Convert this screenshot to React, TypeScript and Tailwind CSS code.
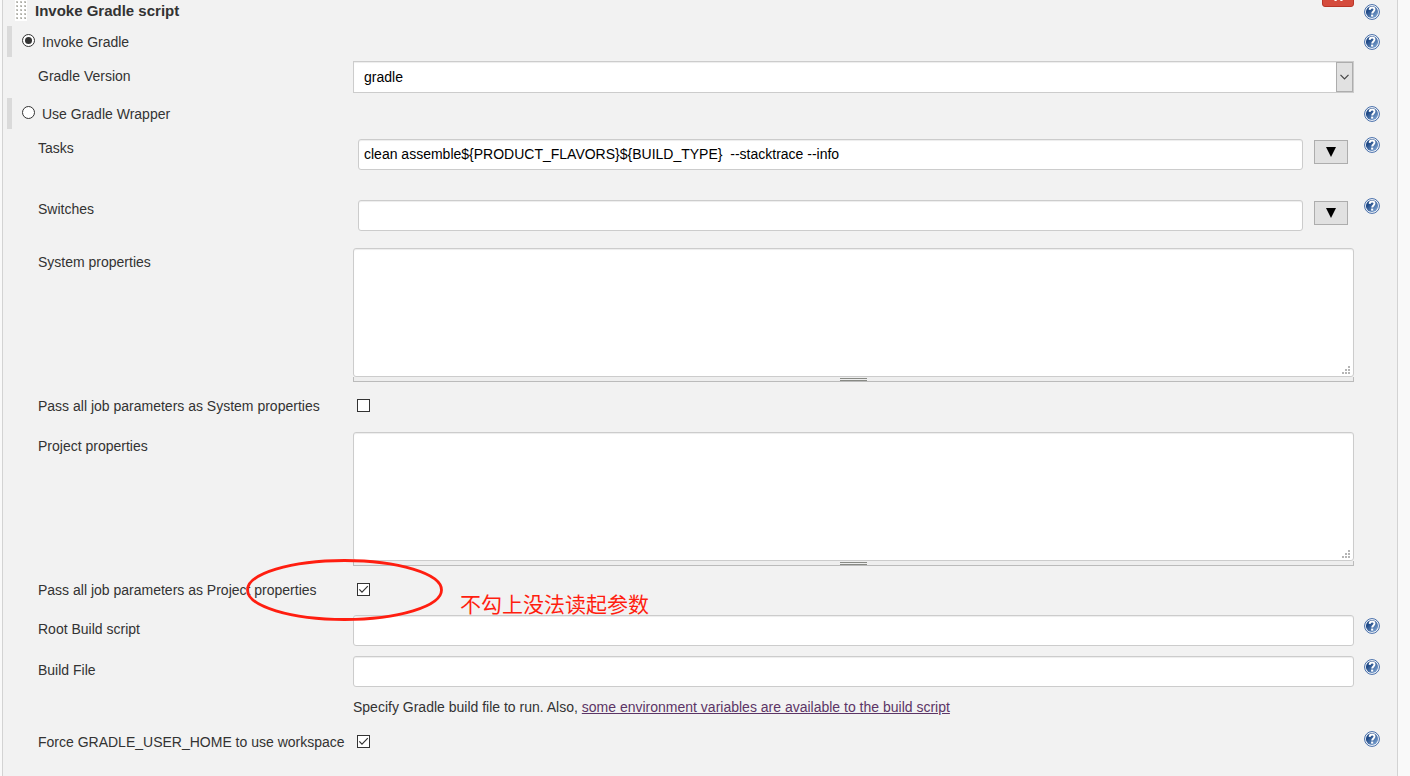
import type { ReactNode } from "react";

function HelpIcon({ topic }: { topic: string }) {
  return (
    <a href="#help" aria-label={`Help for feature: ${topic}`} className="block size-4">
      <svg viewBox="0 0 16 16" className="block size-4">
        <defs>
          <linearGradient id="help-fill" x1="0" y1="0" x2="1" y2="1">
            <stop offset="0.3" stopColor="#204a87" />
            <stop offset="1" stopColor="#8fb4e0" />
          </linearGradient>
        </defs>
        <circle cx="8" cy="8" r="7.4" fill="#fff" stroke="#3f68a6" strokeWidth="1" />
        <circle cx="8" cy="8" r="6.1" fill="url(#help-fill)" />
        <path
          d="M5.6 5.9C5.7 4.2 6.7 3.5 8.1 3.5s2.4.8 2.4 2.1c0 1.9-2.3 1.9-2.3 4"
          fill="none"
          stroke="#fff"
          strokeWidth="1.9"
        />
        <rect x="7.1" y="10.6" width="2.1" height="2" fill="#fff" />
      </svg>
    </a>
  );
}

function Check({ id, checked }: { id: string; checked?: boolean }) {
  return (
    <span className="relative ml-1 mt-3 block size-[13px]">
      <input
        id={id}
        type="checkbox"
        defaultChecked={checked}
        className="peer block size-[13px] appearance-none border border-[#333] bg-white"
      />
      <svg
        viewBox="0 0 13 13"
        className="pointer-events-none absolute inset-0 hidden size-[13px] peer-checked:block"
      >
        <path d="M2.3 6.3 5 9.2 10.8 3.2" fill="none" stroke="#333" strokeWidth="1.2" />
      </svg>
    </span>
  );
}

type RowProps = {
  label: string;
  id: string;
  height: string;
  help?: boolean;
  children: ReactNode;
};

function Row({ label, id, height, help, children }: RowProps) {
  return (
    <div className={`flex items-start pl-[35px] pr-[17px] ${height}`}>
      <label htmlFor={id} className="w-[315px] shrink-0 pt-[9px]">
        {label}
      </label>
      <div className="min-w-0 flex-1">{children}</div>
      <div className="ml-[10px] w-4 shrink-0 pt-2">{help && <HelpIcon topic={label} />}</div>
    </div>
  );
}

function RadioRow({ label, checked }: { label: string; checked?: boolean }) {
  return (
    <div className="flex h-[31px] items-center pl-1 pr-[17px]">
      <span className="w-[5px] self-stretch bg-[#dadada]" />
      <label className="ml-[10px] flex flex-1 items-center gap-[7px]">
        <span className="relative -mt-[3px] block size-[13px]">
          <input
            type="radio"
            name="use-wrapper"
            defaultChecked={checked}
            className="peer block size-[13px] appearance-none rounded-full border border-[#333] bg-white"
          />
          <span className="pointer-events-none absolute inset-[3px] hidden rounded-full bg-[#333] peer-checked:block" />
        </span>
        {label}
      </label>
      <HelpIcon topic={label} />
    </div>
  );
}

const field =
  "block w-full border border-[#ccc] bg-white text-black shadow-[inset_0_1px_1px_rgba(0,0,0,0.075)] outline-none";

function ExpandableInput({ id, value }: { id: string; value?: string }) {
  return (
    <div className="flex items-start pl-[5px] pr-[6px] pt-[10px]">
      <input id={id} defaultValue={value} className={`${field} h-[31px] flex-1 rounded-[3px] px-[5px] pb-[2px]`} />
      <button
        type="button"
        aria-label="Expand field"
        className="ml-[11px] mt-px flex h-6 w-[34px] shrink-0 items-center justify-center border border-[#adadad] bg-[#e1e1e1]"
      >
        <svg viewBox="0 0 10 10" className="size-[10px]">
          <path d="M0 0H10L5 10Z" fill="#000" />
        </svg>
      </button>
    </div>
  );
}

function PropertiesArea({ id }: { id: string }) {
  return (
    <div className="pt-[5px]">
      <div className="relative">
        <textarea id={id} className={`${field} h-[129px] resize-none rounded-[3px] p-[5px]`} />
        <svg viewBox="0 0 8 8" className="pointer-events-none absolute bottom-[3px] right-1 size-2" fill="#b5b5b5">
          <path d="M6 0h2v2H6zM3 3h2v2H3zM6 3h2v2H6zM0 6h2v2H0zM3 6h2v2H3zM6 6h2v2H6z" />
        </svg>
      </div>
      <div className="flex h-[5px] justify-center border border-t-0 border-[#bbb] bg-[#eee]">
        <span className="mt-px h-[3px] w-[27px] border-y border-[#888a85]" />
      </div>
    </div>
  );
}

function TextField({ id }: { id: string }) {
  return (
    <div className="pt-[5px]">
      <input id={id} className={`${field} h-[31px] rounded-[3px] px-[5px]`} />
    </div>
  );
}

export default function App() {
  return (
    <main className="flex min-h-screen bg-[#f9f9f9] pl-[2px] pr-3 font-['Liberation_Sans',Arial,sans-serif] text-[14px] leading-5 text-[#333]">
      <form className="min-w-0 flex-1 border-x border-[#d3d3d3] bg-[#f2f2f2]">
        <header className="flex h-[26px] items-start overflow-hidden pl-3 pr-[17px]">
          <svg className="h-[21px] w-3">
            <defs>
              <pattern id="grip" width="4" height="4" patternUnits="userSpaceOnUse">
                <rect width="4" height="4" fill="#fff" />
                <rect x="1" y="1" width="2" height="2" fill="#c6c6c0" />
                <rect x="2" y="2" width="1" height="1" fill="#a8a8a2" />
              </pattern>
            </defs>
            <rect width="12" height="21" fill="url(#grip)" />
          </svg>
          <h2 className="ml-2 flex-1 pt-px text-[15px] font-bold">Invoke Gradle script</h2>
          <button
            type="button"
            aria-label="Delete"
            className="-mt-4 flex h-[23px] w-8 items-end justify-center rounded-[3px] border border-[#b93527] bg-[#d54c3d] pb-[5px]"
          >
            <svg viewBox="0 0 9 10" className="h-[10px] w-[9px]">
              <path d="M1 0 8 10M8 0 1 10" stroke="#fff" strokeWidth="2.2" />
            </svg>
          </button>
          <span className="ml-[10px] pt-1">
            <HelpIcon topic="Invoke Gradle script" />
          </span>
        </header>

        <RadioRow label="Invoke Gradle" checked />
        <Row label="Gradle Version" id="version" height="h-[41px]">
          <div className="relative pt-1">
            <select id="version" className={`${field} h-8 appearance-none px-[10px]`}>
              <option>gradle</option>
            </select>
            <span className="pointer-events-none absolute bottom-px right-px flex h-[30px] w-[17px] items-center justify-center border border-[#adadad] bg-[#e1e1e1]">
              <svg viewBox="0 0 9 6" className="h-[6px] w-[9px]">
                <path d="M0.5 0.8 4.5 4.8 8.5 0.8" fill="none" stroke="#444" strokeWidth="1.2" />
              </svg>
            </span>
          </div>
        </Row>
        <RadioRow label="Use Gradle Wrapper" />
        <Row label="Tasks" id="tasks" height="h-[61px]" help>
          <ExpandableInput id="tasks" value="clean assemble${PRODUCT_FLAVORS}${BUILD_TYPE}  --stacktrace --info" />
        </Row>
        <Row label="Switches" id="switches" height="h-[53px]" help>
          <ExpandableInput id="switches" />
        </Row>
        <Row label="System properties" id="system" height="h-[144px]">
          <PropertiesArea id="system" />
        </Row>
        <Row label="Pass all job parameters as System properties" id="pass-system" height="h-10">
          <Check id="pass-system" />
        </Row>
        <Row label="Project properties" id="project" height="h-[144px]">
          <PropertiesArea id="project" />
        </Row>
        <div className="relative">
          <Row label="Pass all job parameters as Project properties" id="pass-project" height="h-[39px]">
            <Check id="pass-project" checked />
          </Row>
          <svg
            viewBox="0 0 200 64"
            className="pointer-events-none absolute left-[241px] top-[-13px] z-10 h-16 w-[200px]"
          >
            <ellipse cx="100.5" cy="32" rx="97" ry="29.5" fill="none" stroke="#ff1e10" strokeWidth="2.8" />
          </svg>
          <p className="pointer-events-none absolute left-[457px] top-[18px] z-10 whitespace-nowrap font-['Noto_Sans_CJK_SC',sans-serif] text-[21px] leading-7 text-[#ff1e10]">
            不勾上没法读起参数
          </p>
        </div>
        <Row label="Root Build script" id="root-script" height="h-[41px]" help>
          <TextField id="root-script" />
        </Row>
        <Row label="Build File" id="build-file" height="h-[72px]" help>
          <TextField id="build-file" />
          <p className="pt-[10px]">
            Specify Gradle build file to run. Also,{" "}
            <a href="#env" className="text-[#5c3566] underline">
              some environment variables are available to the build script
            </a>
          </p>
        </Row>
        <Row label="Force GRADLE_USER_HOME to use workspace" id="force-home" height="h-10" help>
          <Check id="force-home" checked />
        </Row>
      </form>
    </main>
  );
}
